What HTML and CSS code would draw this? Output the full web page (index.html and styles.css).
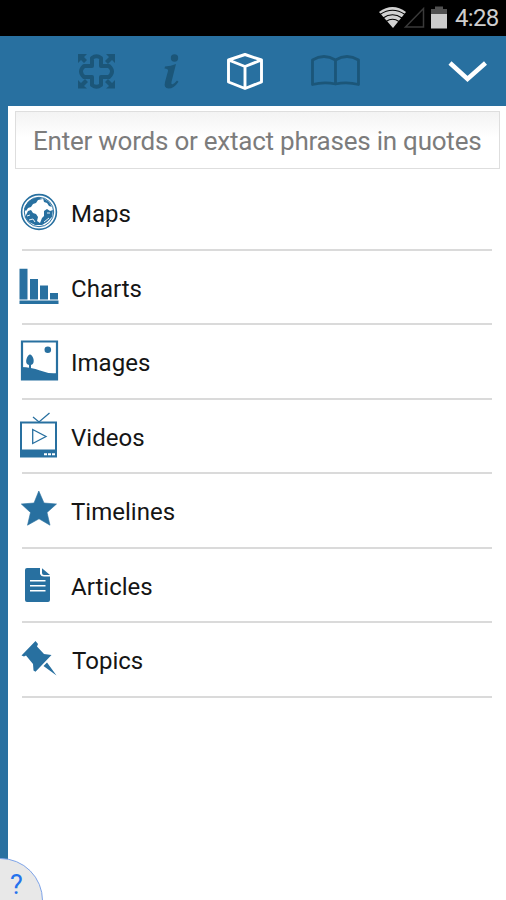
FILE: index.html
```html
<!DOCTYPE html>
<html lang="en">
<head>
<meta charset="utf-8">
<title>Search</title>
<link rel="stylesheet" href="styles.css">
</head>
<body>
<div class="app">
  <header class="status">
    <svg width="76" height="36" viewBox="376 0 76 36">
      <path d="M379 12Q392.500 2 406 12L393 28Z" fill="#d2d2d2"/>
      <g fill="none" stroke="#000" stroke-width="1.100"><path d="M380 14.500Q392.500 6 405 14.500M383 18Q392.500 11.500 402 18M386 21.500Q392.500 17 399 21.500"/></g>
      <path d="M405.500 27L423.500 8.500V27Z" fill="none" stroke="#3a3a3a" stroke-width="1.500"/>
      <path d="M431 14V9H435V6.500H443V9H447V14Z" fill="#505050"/>
      <path d="M431 14H447V28.500H431Z" fill="#cbcbcb"/>
    </svg>
    <span class="clock">4:28</span>
  </header>
  <nav class="toolbar">
    <svg width="506" height="70" viewBox="0 36 506 70" fill="none">
      <path stroke="#1b5679" stroke-width="4" stroke-linejoin="round" d="M92 58Q96.500 54.500 101 58V66H109Q115 71.500 109 77H101V85Q96.500 88.500 92 85V77H84Q78 71.500 84 66H92Z"/>
      <path fill="#1b5679" d="M78 54H87L84 57L87 60L84 63L81 60L78 63ZM115 54H106L109 57L105 61L108 64L112 60L115 63ZM78 88.500V80L81 83L85 79L88 82L84 86L87 88.500ZM115 88.500V80L112 83L108 79L105 82L109 86L106 88.500Z"/>
      <circle cx="174.500" cy="58" r="3.700" fill="#1b5679"/>
      <path fill="#1b5679" d="M165 66.500Q171 66 176 64L171.500 82Q170.800 85 173 84Q175 83 177 80.500L178.500 81.700Q174 88.500 168.500 88.500Q163.500 88 165 82L168 71Q168.500 68.500 164.500 68.500Z"/>
      <g stroke="#fff" stroke-width="2.900" stroke-linejoin="round"><path d="M228.500 60L245 54.500L261.500 60V82L245 88.500L228.500 82ZM228.500 60L245 66.500L261.500 60M245 66.500V88.500"/></g>
      <path stroke="#1b5679" stroke-width="2.800" stroke-linejoin="round" d="M335.500 84V60Q324 53 312.500 60V84.500Q324 81.500 335.500 84Q347 81.500 358.500 84.500V60Q347 53 335.500 60"/>
      <path d="M450 63L467.500 79L485.500 63" stroke="#fff" stroke-width="4.500"/>
    </svg>
  </nav>
  <main class="panel">
    <div class="search"><span>Enter words or extact phrases in quotes</span></div>
    <ul class="list">
      <li class="row"><svg class="icon" viewBox="18 0 42 73">
        <g fill="none" stroke="#2870a0"><circle cx="39" cy="36" r="17.400" stroke-width="1.600"/><circle cx="39" cy="36" r="14.700" stroke-width="1"/></g>
        <path fill="#2870a0" d="M26 29Q30 22 38 21.500L43 23L38 24L36 27L33 28L31 31L28 32L26 35L24 33ZM43 22L49 26L52 31L49 30L47 27L44 26ZM28 35L31 34L33 37L36 38L38 41L37 45L40 47L42 42L44 40L44 35L47 33L50 35L53 34L52 41L47 46L42 49L35 49L29 46L25 41Z"/>
        <path d="M27 40L30 39M29 44L33 43L35 46M44 46L49 42M47 37H50" stroke="#fff" fill="none" stroke-width=".9"/>
      </svg><span>Maps</span></li>
      <li class="row"><svg class="icon" viewBox="18 0 42 73">
        <path fill="#2870a0" d="M19.500 17.800H27.500V48.500H19.500ZM30 28H38V48.500H30ZM40 34.500H48V48.500H40ZM50 42H58V48.500H50ZM19.500 49.500H58.500V53H19.500Z"/>
      </svg><span>Charts</span></li>
      <li class="row"><svg class="icon" viewBox="18 0 42 73">
        <path d="M22 16.500H57V54.500H22Z" fill="none" stroke="#2870a0" stroke-width="2.200"/>
        <path fill="#2870a0" d="M21 42Q31 42 40 45.500Q49 49 57 48V55H21ZM29 43V40Q25 39 26.500 34Q28 29.500 30 29.500Q32 29.500 33.500 34Q34.500 39 31 40V43Z"/><circle cx="47.800" cy="24.800" r="3.300" fill="#2870a0"/>
      </svg><span>Images</span></li>
      <li class="row"><svg class="icon" viewBox="18 0 42 73">
        <path d="M21 22.500H56V56H21Z" fill="none" stroke="#2870a0" stroke-width="2"/>
        <path d="M20 49.500H57V57.500H20Z" fill="#2870a0"/>
        <path d="M33 17L39 22L49.500 13M32.700 29.500V43.500L46 36.500Z" fill="none" stroke="#2870a0" stroke-width="1.300"/>
        <path d="M44 54.300H47M48 54.300H51M52 54.300H55" stroke="#fff" stroke-width="2"/>
      </svg><span>Videos</span></li>
      <li class="row"><svg class="icon" viewBox="18 0 42 73">
        <path fill="#2870a0" stroke="#2870a0" stroke-width=".6" d="M38.800 17L44 29L56.500 30L47 38.500L50 51.200L39 44.800L27.500 51.200L30.500 38.500L21.300 30L34 29Z"/>
      </svg><span>Timelines</span></li>
      <li class="row"><svg class="icon" viewBox="18 0 42 73">
        <path fill="#2870a0" d="M27 19H40V25Q41 27.500 44 27.500H50V51Q50 53 48 53H27Q25 53 25 51V21Q25 19 27 19ZM42 19.300L50 26H44Q42 26 42 24Z"/>
        <path d="M30 31.700H45.500M30 36.700H45.500M30 41.700H45.500" stroke="#fff" stroke-width="1.500"/>
      </svg><span>Articles</span></li>
      <li class="row topics"><svg class="icon" viewBox="18 0 42 73">
        <path fill="#2870a0" d="M35.500 18L38 21L37 23.500L44 31L51.500 32L35.500 48.800L33.500 47.500L33 41L26 32.500L24 33.500L21.500 32.500ZM47 39.500L56.500 52.500L43.500 43Z"/>
      </svg><span>Topics</span></li>
    </ul>
  </main>
  <div class="help"><span>?</span></div>
</div>
</body>
</html>
```
FILE: styles.css
```css
* { box-sizing: border-box; }
body {
  margin: 0;
  font-family: Roboto, "Liberation Sans", sans-serif;
}
.app {
  position: relative;
  height: 900px;
  overflow: hidden;
  display: flex;
  flex-direction: column;
  background: #2870a0;
}
.status {
  height: 36px;
  display: flex;
  align-items: center;
  justify-content: flex-end;
  padding-right: 8px;
  background: #000;
}
.clock {
  width: 43px;
  margin-left: 3px;
  font-size: 24px;
  line-height: 38px;
  letter-spacing: -0.7px;
  color: #cecece;
  white-space: nowrap;
}
svg { display: block; flex: none; }
.toolbar { height: 70px; }
.panel {
  flex: 1;
  margin-left: 8px;
  padding: 5px 6px 0 7px;
  background: #fff;
}
.search {
  height: 58px;
  padding-left: 17px;
  border: 1.5px solid #dedede;
  background: linear-gradient(#f3f3f3, #fff 45%);
  font-size: 26px;
  line-height: 58px;
  letter-spacing: -0.23px;
  color: #7c7c7c;
  white-space: nowrap;
}
.list {
  margin: 7px 8px 0 7px;
  padding: 0;
  list-style: none;
}
.row {
  display: flex;
  height: 74.580px;
  border-bottom: 2px solid #dadada;
  font-size: 24px;
  line-height: 76px;
  letter-spacing: 0.02px;
  color: #151515;
}
.icon {
  width: 42px;
  height: 73px;
  margin: 0 11px 0 -4px;
}
.topics span { margin-left: 1px; }
.help {
  position: absolute;
  left: -42px;
  bottom: -43px;
  width: 85px;
  height: 85px;
  border: 1.5px solid #7da3e8;
  border-radius: 50%;
  background: #e8e8e8;
  color: #2472ed;
  font-size: 27px;
  line-height: 52px;
  padding-left: 51px;
}
```
